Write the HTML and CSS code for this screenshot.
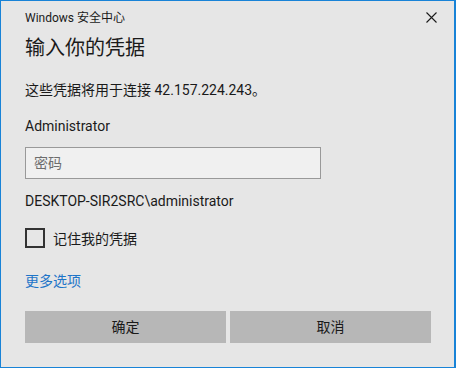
FILE: index.html
```html
<!doctype html>
<html lang="zh-CN">
  <head>
    <meta charset="UTF-8" />
    <title>Windows 安全中心</title>
    <link rel="stylesheet" href="styles.css">
  </head>
  <body>
    <div class="window">
      <div class="titlebar">
        <span class="app-name">Windows 安全中心</span>
        <svg class="close" width="11" height="11" viewBox="0 0 11 11">
          <path d="M0.5 0.5 L10.5 10.5 M10.5 0.5 L0.5 10.5" stroke="#1a1a1a" stroke-width="1.1" fill="none" />
        </svg>
      </div>
      <h1 class="heading">输入你的凭据</h1>
      <p class="desc">这些凭据将用于连接 42.157.224.243。</p>
      <p class="user">Administrator</p>
      <div class="password">密码</div>
      <p class="domain">DESKTOP-SIR2SRC\administrator</p>
      <label class="remember">
        <span class="box"></span>
        <span>记住我的凭据</span>
      </label>
      <a class="more" href="#">更多选项</a>
      <div class="actions">
        <div class="btn">确定</div>
        <div class="btn">取消</div>
      </div>
    </div>
  </body>
</html>
```

FILE: styles.css
```css
* {
  margin: 0;
  padding: 0;
  box-sizing: border-box;
}
body {
  width: 456px;
  height: 368px;
  overflow: hidden;
  font-family: Roboto, "Noto Sans CJK SC", sans-serif;
  color: #1a1a1a;
  background-color: #e6e6e6;
}
.window {
  width: 456px;
  height: 368px;
  border: 1px solid #1883d7;
  border-right-width: 2px;
  background-color: #e6e6e6;
  padding: 0 23px 0 24px;
}
.titlebar {
  display: flex;
  align-items: center;
  justify-content: space-between;
  height: 30px;
  margin-right: -6px;
  font-size: 12px;
}
.titlebar .close {
  display: block;
  margin-top: 2px;
}
.heading {
  margin-top: 3px;
  font-size: 20px;
  font-weight: normal;
  line-height: 28px;
}
.desc {
  margin-top: 18px;
  font-size: 14px;
  line-height: 20px;
}
.user {
  margin-top: 16px;
  font-size: 14px;
  line-height: 20px;
}
.password {
  margin-top: 11px;
  width: 296px;
  height: 32px;
  border: 1px solid #999;
  background-color: #f0f0f0;
  padding-left: 8px;
  font-size: 14px;
  line-height: 30px;
  color: #6d6d6d;
}
.domain {
  margin-top: 12px;
  font-size: 14px;
  line-height: 20px;
}
.remember {
  display: flex;
  align-items: center;
  gap: 8px;
  margin-top: 17px;
  height: 20px;
  font-size: 14px;
}
.remember .box {
  width: 20px;
  height: 20px;
  border: 2px solid #333;
}
.more {
  display: block;
  margin-top: 23px;
  font-size: 14px;
  line-height: 20px;
  color: #1e75c8;
  text-decoration: none;
}
.actions {
  display: flex;
  gap: 4px;
  margin-top: 20px;
}
.btn {
  flex: 1;
  height: 32px;
  background-color: #b7b7b7;
  text-align: center;
  font-size: 14px;
  line-height: 32px;
}
```
